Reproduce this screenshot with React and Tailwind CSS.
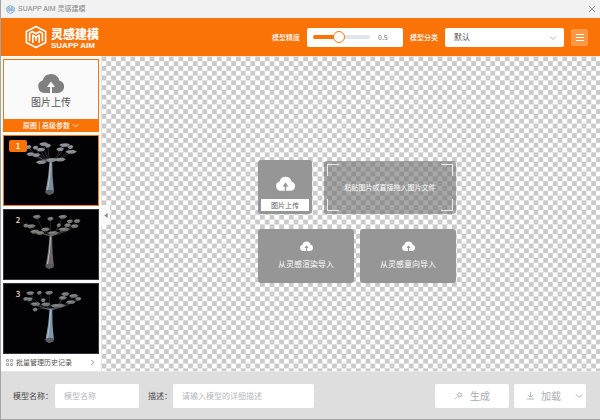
import { useState } from 'react'

const trees = [
  {
    id: 1,
    leaf: '#868c91',
    trunk: '#7f8c99',
    leaves: [
      [121, 25, 14], [112, 42, 14], [74, 34, 10], [80, 56, 12], [98, 59, 13], [114, 81, 17], [146, 74, 19],
      [172, 73, 18], [186, 28, 17], [172, 41, 12], [206, 49, 18], [134, 30, 10], [96, 36, 9], [204, 34, 9],
    ],
  },
  {
    id: 2,
    leaf: '#777271',
    trunk: '#6d6466',
    leaves: [
      [100, 21, 13], [142, 27, 10], [180, 21, 14], [82, 50, 15], [66, 48, 8], [127, 60, 14], [95, 67, 16],
      [110, 71, 13], [150, 71, 17], [184, 60, 18], [202, 35, 10], [195, 47, 11], [224, 34, 11], [217, 50, 13], [168, 47, 7],
    ],
  },
  {
    id: 3,
    leaf: '#727575',
    trunk: '#7d95aa',
    leaves: [
      [80, 28, 13], [108, 27, 8], [138, 27, 13], [66, 46, 9], [78, 47, 10], [96, 62, 16], [95, 79, 8], [120, 50, 8],
      [128, 63, 15], [165, 67, 24], [188, 31, 13], [180, 43, 13], [214, 37, 15], [228, 46, 10], [205, 56, 16],
    ],
  },
]

function LogoMark({ className }) {
  return (
    <svg viewBox="0 0 24 26" fill="none" stroke="currentColor" strokeWidth="1.800" strokeLinejoin="round" className={className}>
      <path d="M12 1.500 22.500 7v12L12 24.500 1.500 19V7Z" />
      <path d="M5 17.500V9l3-2 4 2.500L16 7l3 2v8.500" />
      <path d="M8.500 19.500V11l3.500 2.300L15.500 11v8.500" />
      <path d="M12 13.500V17" />
    </svg>
  )
}

function CloudUpload({ className, arrow }) {
  return (
    <svg viewBox="0 0 26 20" className={className}>
      <path
        fill="currentColor"
        d="M6.500 20A6.500 6.500 0 0 1 4.800 7.300 8.500 8.500 0 0 1 21.300 7.400 6.400 6.400 0 0 1 19.500 20Z"
      />
      <path d="M13 10V20" fill="none" stroke={arrow} strokeWidth="2" />
      <path d="M13 8.500 17 14H9Z" fill={arrow} />
    </svg>
  )
}

function Chevron({ className }) {
  return (
    <svg viewBox="0 0 8 8" fill="none" stroke="currentColor" strokeWidth="1" className={className}>
      <path d="M1 2.500 4 5.500 7 2.500" />
    </svg>
  )
}

function Checkerboard() {
  return (
    <svg className="absolute inset-0 h-full w-full" aria-hidden="true">
      <defs>
        <pattern id="checker" width="9.6" height="9.6" x="4.400" y="0.400" patternUnits="userSpaceOnUse">
          <path d="M0 4.800h4.800V9.600H0ZM4.800 0h4.800v4.800H4.800Z" fill="#cacaca" />
        </pattern>
      </defs>
      <rect width="100%" height="100%" fill="#fff" />
      <rect width="100%" height="100%" fill="url(#checker)" />
    </svg>
  )
}

function Tree({ leaf, trunk, leaves }) {
  return (
    <svg viewBox="0 0 288 213" className="h-full w-full">
      <g fill="none" stroke={leaf} strokeWidth="2">
        {leaves.map(([x, y]) => (
          <path key={`${x}-${y}`} d={`M${x} ${y}Q${x * 0.6 + 57} 72 143 80`} opacity="0.5" />
        ))}
      </g>
      {leaves.map(([x, y, r]) => (
        <g key={`${x}-${y}`}>
          <path d={`M${x - r} ${y}l${r * 0.6}-5 ${r * 0.9}-1 ${r * 0.5} 5-${r * 0.5} 6-${r * 0.9} 1Z`} fill={leaf} />
          <path d={`M${x - r + 4} ${y - 2}h${r}`} stroke="#a3a9ac" strokeWidth="1.500" />
        </g>
      ))}
      <path d="M140 76h8q-1 50 5 96-6 9-14 9t-12-8q10-50 13-97" fill={trunk} />
      <path d="M142 82q0 45-9 86" stroke="#bcc4cb" strokeWidth="3" fill="none" />
      <ellipse cx="140" cy="173" rx="13" ry="7" fill="#565b5f" />
    </svg>
  )
}

function Header() {
  const [precision, setPrecision] = useState(0.5)
  const filled = ((precision - 0.1) / 0.9) * 100

  return (
    <header className="flex h-[38px] items-center justify-between bg-[#f97306] pr-3 pl-6 text-white">
      <div className="flex items-center gap-1">
        <LogoMark className="h-6 w-[22px]" />
        <div className="pt-0.5">
          <div className="text-[12px] leading-[16px] font-black">灵感建模</div>
          <div className="font-['Liberation_Sans'] text-[8px] leading-[8px] font-bold">SUAPP AIM</div>
        </div>
      </div>
      <div className="flex items-center gap-[7px] text-[7px]">
        <label htmlFor="precision" className="font-medium">模型精度</label>
        <div className="flex h-[19px] w-24 items-center gap-2 rounded-xs bg-white px-1.5">
          <input
            id="precision"
            type="range"
            min="0.1"
            max="1"
            step="0.1"
            value={precision}
            onChange={(e) => setPrecision(Number(e.target.value))}
            style={{ backgroundImage: `linear-gradient(to right, #f97306 ${filled}%, #e1e5ec ${filled}%)` }}
            className="h-1 w-[57px] appearance-none rounded-full [&::-webkit-slider-thumb]:h-3 [&::-webkit-slider-thumb]:w-3 [&::-webkit-slider-thumb]:appearance-none [&::-webkit-slider-thumb]:rounded-full [&::-webkit-slider-thumb]:border [&::-webkit-slider-thumb]:border-[#f97306] [&::-webkit-slider-thumb]:bg-white"
          />
          <output htmlFor="precision" className="text-[7px] text-[#606266]">{precision}</output>
        </div>
        <label htmlFor="category" className="font-medium">模型分类</label>
        <div className="relative">
          <select
            id="category"
            className="block h-[19px] w-[119px] appearance-none rounded-xs bg-white px-[9px] text-[8px] text-[#505256]"
          >
            <option>默认</option>
          </select>
          <Chevron className="pointer-events-none absolute top-1.5 right-[7px] h-2 w-2 text-[#b0b4bc]" />
        </div>
        <button aria-label="菜单" className="flex h-[17px] w-[17px] items-center justify-center rounded-xs bg-[#fb9846]">
          <svg viewBox="0 0 8 8" className="h-2 w-2" stroke="currentColor">
            <path d="M0 1.500h8M0 4.500h8M0 7.500h8" />
          </svg>
        </button>
      </div>
    </header>
  )
}

function Sidebar() {
  return (
    <aside className="relative z-10 flex w-[101px] shrink-0 flex-col border-r border-[#e4e4e4] bg-[#fafafa] pt-[3px]">
      <div className="flex flex-col gap-[3px] px-0.5">
        <div className="flex h-[73px] flex-col border border-[#f97306] bg-[#fafafa]">
          <button className="flex grow flex-col items-center justify-center gap-0.5 pt-0.5 text-[10px] leading-[14px] text-[#505050]">
            <CloudUpload className="h-5 w-[26px] text-[#808080]" arrow="#fafafa" />
            图片上传
          </button>
          <button className="flex h-3 items-center justify-center gap-0.5 bg-[#f97306] text-[7px] font-medium text-white">
            原图 | 高级参数
            <Chevron className="h-[7px] w-[7px]" />
          </button>
        </div>
        {trees.map((tree) => (
          <button
            key={tree.id}
            className={`relative h-[71px] border bg-[#020204] ${tree.id === 1 ? 'border-[#f97306]' : 'border-[#34343c]'}`}
          >
            <Tree {...tree} />
            <span
              className={`absolute top-1 left-[5px] flex h-3 w-[18px] items-center justify-center rounded-xs text-[8px] font-medium ${tree.id === 1 ? 'bg-[#f97306] text-white' : 'text-[#f3dfc0]'}`}
            >
              {tree.id}
            </span>
          </button>
        ))}
      </div>
      <button className="flex grow items-center gap-[3px] bg-white px-[5px] text-[7px] text-[#505050]">
        <svg viewBox="0 0 7 7" className="h-[7px] w-[7px]" fill="none" stroke="#909090" strokeWidth="0.800">
          <path d="M.5.500h2v2h-2ZM4.500.500h2v2h-2ZM.5 4.500h2v2h-2ZM4.500 4.500h2v2h-2Z" />
        </svg>
        批量管理历史记录
        <Chevron className="ml-auto h-[7px] w-[7px] -rotate-90 text-[#888]" />
      </button>
      <button
        aria-label="收起"
        className="absolute top-[149px] left-full flex h-5 w-[9px] items-center justify-center rounded-r-xs bg-[#f8f8f8]"
      >
        <svg viewBox="0 0 4 6" className="h-[5px] w-1" fill="#888">
          <path d="M4 0v6L0 3Z" />
        </svg>
      </button>
    </aside>
  )
}

function ImportButton({ children }) {
  return (
    <button className="flex h-[54px] w-24 flex-col items-center justify-center gap-[7px] rounded-[3px] bg-[#969696] text-[8px] leading-[12px] text-white">
      <CloudUpload className="h-2.5 w-[13px]" arrow="#969696" />
      {children}
    </button>
  )
}

function Canvas() {
  return (
    <main className="relative flex grow items-center justify-center pt-[15px] pl-3">
      <Checkerboard />
      <div className="relative flex flex-col gap-[15px] text-white">
        <div className="flex items-end gap-3">
          <button className="flex h-[54px] w-[54px] flex-col items-center justify-between rounded-[3px] bg-[#969696] px-[3px] pt-4 pb-[3px]">
            <CloudUpload className="h-[15px] w-[19px]" arrow="#969696" />
            <span className="w-full bg-white text-[7px] leading-[12px] text-[#606060]">图片上传</span>
          </button>
          <div className="relative flex h-[53px] grow items-center justify-center rounded-[3px] bg-[#6e6e6e]/60 text-[7px]">
            <span className="absolute top-[3px] left-[3px] h-3 w-3 border-t border-l border-white/80" />
            <span className="absolute top-[3px] right-[3px] h-3 w-3 border-t border-r border-white/80" />
            <span className="absolute bottom-[3px] left-[3px] h-3 w-3 border-b border-l border-white/80" />
            <span className="absolute right-[3px] bottom-[3px] h-3 w-3 border-r border-b border-white/80" />
            粘贴图片或直接拖入图片文件
          </div>
        </div>
        <div className="flex gap-1.5">
          <ImportButton>从灵感渲染导入</ImportButton>
          <ImportButton>从灵感意向导入</ImportButton>
        </div>
      </div>
    </main>
  )
}

function Footer() {
  return (
    <footer className="flex h-12 items-center border-t border-[#e8e8e8] bg-[#dedede] pr-3.5 pl-3 text-[8px] text-[#484848]">
      <label htmlFor="name" className="mr-0.5">模型名称：</label>
      <input
        id="name"
        placeholder="模型名称"
        className="mr-[9px] h-6 w-[84px] rounded-xs bg-white px-[9px] placeholder:text-[#b4b8c0]"
      />
      <label htmlFor="description" className="mr-px">描述：</label>
      <input
        id="description"
        placeholder="请输入模型的详细描述"
        className="h-6 w-[141px] rounded-xs bg-white px-[9px] placeholder:text-[#b4b8c0]"
      />
      <button className="ml-auto flex h-6 w-[74px] items-center justify-center gap-[7px] rounded-xs bg-white text-[10px] text-[#a8abb4]">
        <svg viewBox="0 0 9 9" className="h-[9px] w-[9px]" fill="none" stroke="currentColor" strokeWidth="0.800">
          <path d="M.8 8.200 3.400 5.600M5.200 1.200l.9 1.300 1.700-.3-.8 1.600.9 1.500-1.800-.2L4.900 6.500l-.4-1.800-1.700-.8 1.700-.8Z" />
        </svg>
        生成
      </button>
      <button className="ml-[5px] flex h-6 w-[72px] items-center gap-1.5 rounded-xs bg-white pr-[3px] pl-3 text-[10px] text-[#a8abb4]">
        <svg viewBox="0 0 9 9" className="h-[9px] w-[9px]" fill="none" stroke="currentColor" strokeWidth="0.900">
          <path d="M4.500.8V6M2 3.700 4.500 6.200 7 3.700M.8 8h7.400" />
        </svg>
        加载
        <Chevron className="ml-auto h-2 w-2" />
      </button>
    </footer>
  )
}

export default function App() {
  return (
    <div className="flex min-h-screen flex-col border-b border-l border-[#a4a4a4] bg-[#dedede] font-['Noto_Sans_CJK_SC',sans-serif]">
      <div className="flex h-[18px] items-center gap-[3px] bg-[#f2f2f2] pr-1 pl-[5px] text-[7px] text-[#858585]">
        <LogoMark className="h-[9px] w-[9px] text-[#4389c4]" />
        <h1 className="font-['Liberation_Sans','Noto_Sans_CJK_SC',sans-serif]">SUAPP AIM 灵感建模</h1>
        <button aria-label="关闭" className="ml-auto">
          <svg viewBox="0 0 8 8" className="h-2 w-2" stroke="#888" strokeWidth="0.800">
            <path d="M1 1l6 6M7 1 1 7" />
          </svg>
        </button>
      </div>
      <Header />
      <div className="flex grow">
        <Sidebar />
        <Canvas />
      </div>
      <Footer />
    </div>
  )
}
